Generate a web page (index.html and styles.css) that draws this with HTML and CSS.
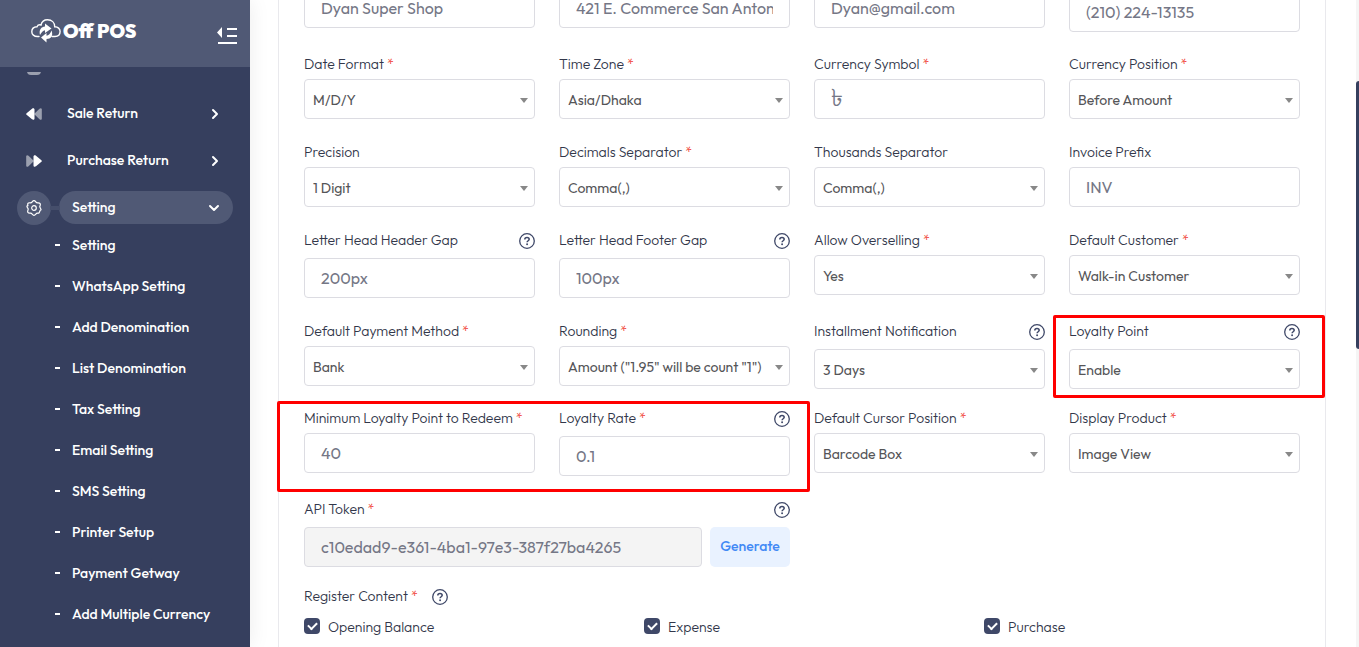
FILE: index.html
```html
<!DOCTYPE html>
<html lang="en">
<head>
<meta charset="utf-8">
<title>Off POS</title>
<link rel="stylesheet" href="styles.css">
</head>
<body>
<svg class="sprite" aria-hidden="true">
  <symbol id="help" viewBox="0 0 16 16"><circle cx="8" cy="8" r="7.3" fill="none" stroke="currentColor" stroke-width="1.3"/><path d="M5.8 6.5c0-1.4 1-2.1 2.2-2.1s2.2.7 2.2 1.9c0 1.4-2.1 1.5-2.1 3" fill="none" stroke="currentColor" stroke-width="1.5"/><circle cx="8.1" cy="11.2" r=".95" fill="currentColor"/></symbol>
  <symbol id="chevron" viewBox="0 0 12 12"><path d="M4 2l4 4-4 4" fill="none" stroke="currentColor" stroke-width="2" stroke-linecap="round" stroke-linejoin="round"/></symbol>
</svg>
<div class="app">
  <aside class="sidebar">
    <header class="brand">
      <a class="logo" href="#">
        <svg class="logo-cloud" viewBox="0 0 30 26" aria-hidden="true"><path d="M8 18.500H6.500C3 18.500.8 16.500.8 13.700c0-2.900 2.200-4.900 5.200-5 .8-1.700 2.300-2.200 4-1.700C10.800 3.700 13.300 1.800 16.500 1.800c4.300 0 7.200 2.700 7.200 7 3.200-.1 5.400 2 5.400 4.800s-2 4.900-5.100 4.900h-3" fill="none" stroke="currentColor" stroke-width="1.400" stroke-linecap="round"/><path d="M9 17C7.500 12 10.500 8.500 14 8.500V5.500l6.500 5-6.500 4.500v-2.800c-2 .3-3.500 2-5 4.800z" fill="currentColor"/><path d="M20.500 12.500c2 5-.5 8.500-5 8.500v3.500L10 19.500l5.500-4.500v2.800c2-.3 4-2.300 5-5.300z" fill="currentColor"/></svg>
        <span>Off POS</span>
      </a>
      <button class="toggle" type="button" aria-label="Toggle menu">
        <svg viewBox="0 0 20 18" aria-hidden="true"><path d="M0 5.500L5 0v11zM10 1h10v2H10zM10 8h10v2H10zM1 15h19v2H1z" fill="currentColor"/></svg>
      </button>
    </header>
    <nav class="menu">
      <div class="menu-cut"><svg viewBox="0 0 14 14" aria-hidden="true"><rect width="14" height="14" rx="4" fill="currentColor"/></svg></div>
      <a class="item" href="#"><span class="item-icon"><svg viewBox="0 0 16 12" aria-hidden="true"><path d="M8 6L13.500.700C14.800-.4 15.800.3 15.800 1.500v9c0 1.200-1 1.900-2.300.800z" fill="#9ba0af"/><path d="M.600 5.200L6 .7C7.500-.3 8.500.6 8.500 1.500v9c0 1-1 1.800-2.500.8L.6 6.800c-.6-.6-.6-1 0-1.600z" fill="currentColor"/></svg></span><span class="item-text">Sale Return</span><svg class="chev" aria-hidden="true"><use href="#chevron"/></svg></a>
      <a class="item" href="#"><span class="item-icon"><svg viewBox="0 0 16 12" aria-hidden="true"><path d="M8 6L2.500.700C1.200-.4.200.3.200 1.500v9c0 1.200 1 1.900 2.300.800z" fill="#9ba0af"/><path d="M15.400 5.200L10 .7C8.500-.3 7.500.6 7.500 1.500v9c0 1 1 1.800 2.500.8l5.400-4.500c.6-.6.6-1 0-1.600z" fill="currentColor"/></svg></span><span class="item-text">Purchase Return</span><svg class="chev" aria-hidden="true"><use href="#chevron"/></svg></a>
      <a class="item active" href="#"><span class="item-icon"><svg class="gear" viewBox="0 0 16 16" fill="none" stroke="currentColor" stroke-width="1.200" stroke-linejoin="round" aria-hidden="true"><circle cx="8" cy="8" r="2.300"/><path d="M6.200 1.800Q8-.4 9.800 1.800q.9 1.300 2.400 1 2.900.2 1.900 2.900-.8 1.200.2 2.300 1.600 2.200-.2 2.300-.9 3.200-1.900 2.900-1.500-.3-2.400 1-1.800 2.200-3.600 0-.9-1.300-2.400-1-2.900-.2-1.900-2.900.8-1.200-.2-2.300-1.600-2.200.2-2.300-.9-3.200 1.900-2.900 1.500.3 2.400-1z"/></svg></span><span class="item-text">Setting</span><svg class="chev down" aria-hidden="true"><use href="#chevron"/></svg></a>
      <ul class="submenu">
        <li><a href="#">Setting</a></li>
        <li><a href="#">WhatsApp Setting</a></li>
        <li><a href="#">Add Denomination</a></li>
        <li><a href="#">List Denomination</a></li>
        <li><a href="#">Tax Setting</a></li>
        <li><a href="#">Email Setting</a></li>
        <li><a href="#">SMS Setting</a></li>
        <li><a href="#">Printer Setup</a></li>
        <li><a href="#">Payment Getway</a></li>
        <li><a href="#">Add Multiple Currency</a></li>
      </ul>
    </nav>
  </aside>
  <main class="main">
    <form class="card">
      <div class="row scrolled">
        <div class="field"><input class="control" type="text" value="Dyan Super Shop"></div>
        <div class="field"><input class="control" type="text" value="421 E. Commerce San Antonio"></div>
        <div class="field"><input class="control" type="text" value="Dyan@gmail.com"></div>
        <div class="field lowered"><input class="control" type="text" value="(210) 224-13135"></div>
      </div>
      <div class="row">
        <div class="field"><div class="head"><label for="date">Date Format <b>*</b></label></div><div class="pick"><select id="date"><option>M/D/Y</option></select></div></div>
        <div class="field"><div class="head"><label for="zone">Time Zone <b>*</b></label></div><div class="pick"><select id="zone"><option>Asia/Dhaka</option></select></div></div>
        <div class="field"><div class="head"><label for="symbol">Currency Symbol <b>*</b></label></div><input class="control symbol" id="symbol" type="text" value="৳"></div>
        <div class="field"><div class="head"><label for="cpos">Currency Position <b>*</b></label></div><div class="pick"><select id="cpos"><option>Before Amount</option></select></div></div>
      </div>
      <div class="row">
        <div class="field"><div class="head"><label for="prec">Precision</label></div><div class="pick"><select id="prec"><option>1 Digit</option></select></div></div>
        <div class="field"><div class="head"><label for="dec">Decimals Separator <b>*</b></label></div><div class="pick"><select id="dec"><option>Comma(,)</option></select></div></div>
        <div class="field"><div class="head"><label for="thou">Thousands Separator</label></div><div class="pick"><select id="thou"><option>Comma(,)</option></select></div></div>
        <div class="field"><div class="head"><label for="prefix">Invoice Prefix</label></div><input class="control" id="prefix" type="text" value="INV"></div>
      </div>
      <div class="row">
        <div class="field"><div class="head tall"><label for="hgap">Letter Head Header Gap</label><svg class="help" aria-hidden="true"><use href="#help"/></svg></div><input class="control" id="hgap" type="text" value="200px"></div>
        <div class="field"><div class="head tall"><label for="fgap">Letter Head Footer Gap</label><svg class="help" aria-hidden="true"><use href="#help"/></svg></div><input class="control" id="fgap" type="text" value="100px"></div>
        <div class="field"><div class="head"><label for="over">Allow Overselling <b>*</b></label></div><div class="pick"><select id="over"><option>Yes</option></select></div></div>
        <div class="field"><div class="head"><label for="cust">Default Customer <b>*</b></label></div><div class="pick"><select id="cust"><option>Walk-in Customer</option></select></div></div>
      </div>
      <div class="row tight">
        <div class="field"><div class="head"><label for="pay">Default Payment Method <b>*</b></label></div><div class="pick"><select id="pay"><option>Bank</option></select></div></div>
        <div class="field"><div class="head"><label for="round">Rounding <b>*</b></label></div><div class="pick"><select id="round"><option>Amount ("1.95" will be count "1")</option></select></div></div>
        <div class="field"><div class="head tall"><label for="inst">Installment Notification</label><svg class="help" aria-hidden="true"><use href="#help"/></svg></div><div class="pick"><select id="inst"><option>3 Days</option></select></div></div>
        <div class="field mark-one"><div class="head tall"><label for="loyal">Loyalty Point</label><svg class="help" aria-hidden="true"><use href="#help"/></svg></div><div class="pick"><select id="loyal"><option>Enable</option></select></div></div>
      </div>
      <div class="row">
        <div class="field mark-two"><div class="head"><label for="min">Minimum Loyalty Point to Redeem <b>*</b></label></div><input class="control" id="min" type="text" value="40"></div>
        <div class="field"><div class="head tall"><label for="rate">Loyalty Rate <b>*</b></label><svg class="help" aria-hidden="true"><use href="#help"/></svg></div><input class="control" id="rate" type="text" value="0.1"></div>
        <div class="field"><div class="head"><label for="cursor">Default Cursor Position <b>*</b></label></div><div class="pick"><select id="cursor"><option>Barcode Box</option></select></div></div>
        <div class="field"><div class="head"><label for="disp">Display Product <b>*</b></label></div><div class="pick"><select id="disp"><option>Image View</option></select></div></div>
      </div>
      <div class="row tight">
        <div class="field wide"><div class="head tall"><label for="token">API Token <b>*</b></label><svg class="help" aria-hidden="true"><use href="#help"/></svg></div>
          <div class="token"><input class="control" id="token" type="text" value="c10edad9-e361-4ba1-97e3-387f27ba4265" readonly><button class="generate" type="button">Generate</button></div>
        </div>
      </div>
      <fieldset class="register">
        <legend class="legend"><span>Register Content <b>*</b></span><svg class="help" aria-hidden="true"><use href="#help"/></svg></legend>
        <div class="checks">
          <label><input type="checkbox" checked>Opening Balance</label>
          <label><input type="checkbox" checked>Expense</label>
          <label><input type="checkbox" checked>Purchase</label>
        </div>
      </fieldset>
    </form>
  </main>
  <div class="scrollbar"><div class="thumb"></div></div>
</div>
</body>
</html>
```
FILE: styles.css
```css
* { box-sizing: border-box; }
body { margin: 0; background: #fff; color: #32374a; font: 300 14px/20px Outfit, Lato, "Noto Sans", sans-serif; }
input, select, button { font-family: inherit; }
a { color: inherit; text-decoration: none; }
svg { display: block; flex: none; }
.sprite { display: none; }
.app { display: flex; height: 100vh; overflow: hidden; }

.sidebar { flex: none; width: 250px; background: #363f5e; color: #fff; box-shadow: 0 0 20px rgba(0, 0, 0, .08); }
.brand { display: flex; justify-content: space-between; height: 67px; padding: 18px 13px 0 31px; background: #505975; }
.logo { display: flex; gap: 2px; font-size: 19px; line-height: 26px; font-weight: 900; }
.logo-cloud { width: 30px; height: 26px; }
.toggle { align-self: flex-start; margin-top: 9px; padding: 0; border: 0; background: none; color: #fff; }
.toggle svg { width: 20px; height: 18px; }

.menu { padding: 5px 17px 0; font-weight: 500; }
.menu-cut { display: flex; align-items: flex-end; height: 3px; margin: 0 10px 22px; overflow: hidden; color: #9ba0af; }
.menu-cut svg { width: 14px; height: 14px; }
.item { display: flex; align-items: center; height: 33px; margin-bottom: 14px; }
.item-icon { display: flex; flex: none; align-items: center; justify-content: center; width: 34px; height: 34px; }
.item-icon svg { width: 16px; height: 12px; }
.item-icon .gear { width: 16px; height: 16px; }
.item-text { flex: 1; padding: 0 0 2px 16px; }
.chev { width: 12px; height: 12px; margin-right: 12px; }
.item.active { margin-bottom: 0; }
.active .item-icon { border-radius: 50%; background: #505975; }
.active .item-text { position: relative; margin-left: 8px; padding: 6px 0 7px 13px; border-radius: 17px 0 0 17px; background: #505975; }
.active .item-text::before { content: ""; position: absolute; left: -9px; top: 15px; width: 10px; height: 4px; background: #454e6b; }
.active .chev { box-sizing: content-box; margin: 0; padding: 11px 13px 10px 0; border-radius: 0 17px 17px 0; background: #505975; }
.active .chev use { transform: rotate(90deg); transform-origin: 6px 6px; }
.submenu { margin: 0; padding: 0; list-style: none; }
.submenu a { display: flex; align-items: center; height: 41px; padding-left: 38px; }
.submenu a::before { content: ""; width: 5px; height: 2px; margin-right: 12px; background: #fff; }

.main { flex: 1; min-width: 0; padding: 0 30px 0 28px; }
.card { margin-top: -12px; min-height: calc(100vh + 12px); padding: 0 25px 20px; border: 1px solid #e9e9ed; border-top: 0; }
.row { display: grid; grid-template-columns: repeat(4, minmax(0, 1fr)); align-items: start; column-gap: 24px; padding-bottom: 23px; }
.row.scrolled { padding-bottom: 22px; }
.row.tight { padding-bottom: 19px; }
.lowered { padding-top: 4px; }
.wide { grid-column: span 2; }
.head { display: flex; justify-content: space-between; height: 20px; margin-bottom: 5px; white-space: nowrap; }
.head.tall { height: 23px; }
b { color: #f0382e; font-weight: 300; }
.help { width: 16px; height: 16px; margin-top: 3px; color: #3f4868; overflow: visible; }
.control, select { display: block; width: 100%; height: 40px; border: 1px solid #dcdce2; border-radius: 4px; background: #fff; font-weight: 400; }
.control { padding: 0 16px; color: #757786; font-size: 16px; }
.control.symbol { font-size: 24px; }
.control[readonly] { background: #f4f4f4; }
select { appearance: none; padding: 2px 26px 0 8px; color: #555558; font-size: 14px; }
.pick { position: relative; }
.pick::after { content: ""; position: absolute; right: 7px; top: 19px; border: 4px solid transparent; border-top: 5px solid #888; border-bottom: 0; pointer-events: none; }
.token { display: flex; gap: 8px; }
.token .control { flex: 1; min-width: 0; }
.generate { width: 80px; padding: 0 0 2px; border: 0; border-radius: 5px; background: #e9f2ff; color: #4189f5; font-size: 14px; font-weight: 500; }
.register { margin: 0; padding: 0; border: 0; }
.legend { display: flex; gap: 14px; height: 31px; padding: 0; }
.checks { display: grid; grid-template-columns: repeat(3, minmax(0, 1fr)); column-gap: 24px; }
.checks label { display: flex; align-items: center; gap: 8px; }
.checks input { appearance: none; display: grid; place-items: center; width: 16px; height: 16px; margin: 0 0 2px; border-radius: 4px; background: #3f4868; }
.checks input::before { content: ""; width: 7px; height: 4px; margin-bottom: 2px; border: solid #fff; border-width: 0 0 2px 2px; transform: rotate(-45deg); }

.mark-one, .mark-two { position: relative; }
.mark-one::after, .mark-two::after { content: ""; position: absolute; border: 3px solid #f00; border-radius: 2px; pointer-events: none; }
.mark-one::after { inset: -6px -25px -9px -16px; }
.mark-two::after { inset: -7px calc(-100% - 44px) -19px -27px; }

.scrollbar { flex: none; width: 3px; padding-top: 81px; background: #f5f5f5; }
.thumb { height: 268px; border-radius: 3px 0 0 3px; background: #363f5e; }
```
